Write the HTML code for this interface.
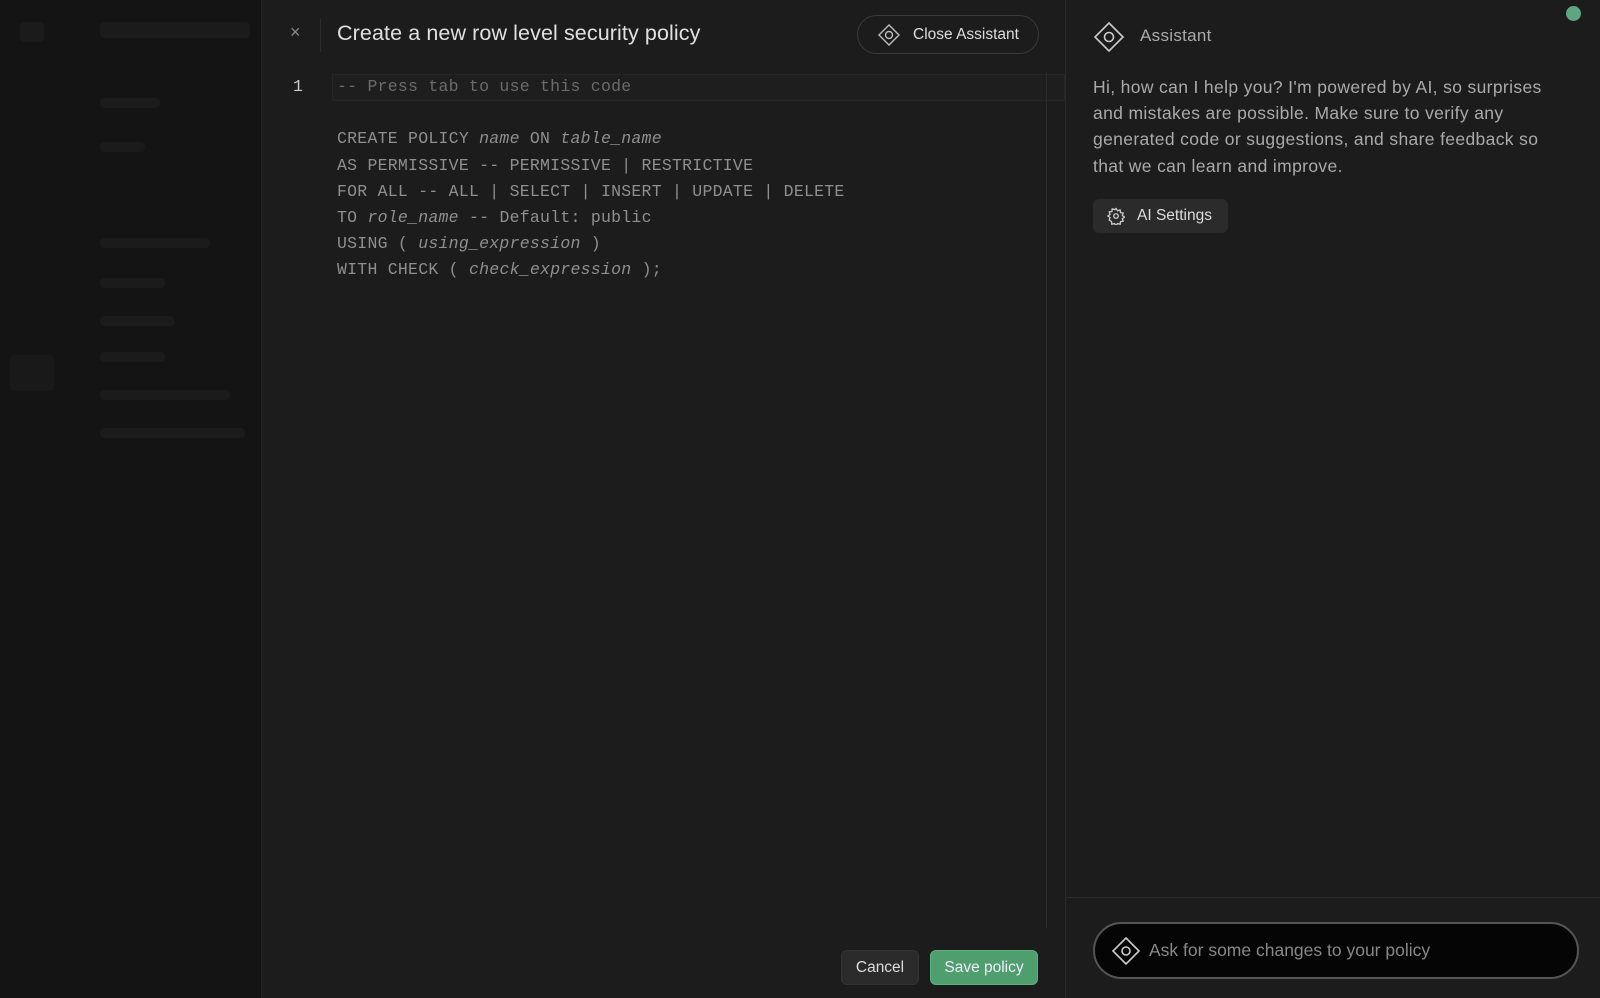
<!DOCTYPE html>
<html><head><style>
*{margin:0;padding:0;box-sizing:border-box}
body{width:1600px;height:998px;background:#161616;font-family:"Liberation Sans",sans-serif;position:relative;overflow:hidden}
.a{position:absolute}
.side{left:0;top:0;width:262px;height:998px;background:#141414;border-right:1px solid #222}
.blob{position:absolute;background:#1b1b1b;border-radius:4px}
.main{left:262px;top:0;width:803px;height:998px;background:#1c1c1c}
.code{font-family:"Liberation Mono",monospace;font-size:16.5px;color:#8f8f8f;white-space:pre;line-height:26.2px;letter-spacing:0.25px}
.code i{font-style:italic}
.asst{left:1065px;top:0;width:535px;height:998px;background:#1c1c1c;border-left:1px solid #2a2a2a}
</style></head><body>
<div class="a side">
<div class="blob" style="left:20px;top:22px;width:24px;height:20px"></div>
<div class="blob" style="left:100px;top:22px;width:150px;height:16px"></div>
<div class="blob" style="left:100px;top:98px;width:60px;height:10px"></div>
<div class="blob" style="left:100px;top:142px;width:45px;height:10px"></div>
<div class="blob" style="left:100px;top:238px;width:110px;height:10px"></div>
<div class="blob" style="left:100px;top:278px;width:65px;height:10px"></div>
<div class="blob" style="left:100px;top:316px;width:75px;height:10px"></div>
<div class="blob" style="left:100px;top:352px;width:65px;height:10px"></div>
<div class="blob" style="left:100px;top:390px;width:130px;height:10px"></div>
<div class="blob" style="left:100px;top:428px;width:145px;height:10px"></div>
<div class="blob" style="left:10px;top:355px;width:44px;height:36px;background:#191919"></div>
</div>
<div class="a main">
<div class="a" style="left:28px;top:22px;color:#888;font-size:18px">×</div>
<div class="a" style="left:58px;top:18px;width:1px;height:34px;background:#2c2c2c"></div>
<div class="a" style="left:75px;top:21px;color:#e0e0e0;font-size:21.5px;letter-spacing:0.1px">Create a new row level security policy</div>
<div class="a" style="left:595px;top:15px;width:182px;height:39px;border:1px solid #3a3a3a;border-radius:20px;color:#ddd;font-size:15.5px;padding:10px 0 0 55px">Close Assistant
<svg class="a" style="left:20px;top:8px" width="22" height="22" viewBox="0 0 22 22" fill="none" stroke="#bbb" stroke-width="1.4"><path d="M11 1L21 11L11 21L1 11Z"/><circle cx="11" cy="11" r="3.5"/></svg></div>
<div class="a" style="left:70px;top:74px;width:733px;height:27px;border:1px solid #262626;background:#1e1e1e"></div>
<div class="a code" style="left:31px;top:74px;color:#ccc">1</div>
<div class="a code" style="left:75px;top:74px"><span style="color:#6b6b6b">-- Press tab to use this code</span>

CREATE POLICY <i>name</i> ON <i>table_name</i>
AS PERMISSIVE -- PERMISSIVE | RESTRICTIVE
FOR ALL -- ALL | SELECT | INSERT | UPDATE | DELETE
TO <i>role_name</i> -- Default: public
USING ( <i>using_expression</i> )
WITH CHECK ( <i>check_expression</i> );</div>
<div class="a" style="left:784px;top:72px;width:1px;height:856px;background:#2c2c2c"></div>
<div class="a" style="left:579px;top:950px;width:78px;height:35px;background:#2b2b2b;border:1px solid #333;border-radius:6px;color:#ddd;font-size:15.5px;text-align:center;line-height:33px">Cancel</div>
<div class="a" style="left:668px;top:950px;width:108px;height:35px;background:#4e9e6e;border:1px solid #5fb07f;border-radius:6px;color:#eef;font-size:15.5px;text-align:center;line-height:33px">Save policy</div>
</div>
<div class="a asst">
<svg class="a" style="left:27px;top:21px" width="32" height="32" viewBox="0 0 32 32" fill="none" stroke="#ccc" stroke-width="1.6"><path d="M16 2L30 16L16 30L2 16Z"/><circle cx="16" cy="16" r="4.5"/></svg>
<div class="a" style="left:74px;top:26px;color:#aaa;font-size:17px;letter-spacing:0.3px">Assistant</div>
<div class="a" style="left:27px;top:74px;width:470px;color:#aaa;font-size:17.5px;line-height:26.2px;letter-spacing:0.35px">Hi, how can I help you? I'm powered by AI, so surprises and mistakes are possible. Make sure to verify any generated code or suggestions, and share feedback so that we can learn and improve.</div>
<div class="a" style="left:27px;top:199px;width:135px;height:34px;background:#2b2b2b;border-radius:6px;color:#ddd;font-size:15.5px;padding:8px 0 0 44px">AI Settings
<svg class="a" style="left:14px;top:8px" width="18" height="18" viewBox="0 0 24 24" fill="none" stroke="#ccc" stroke-width="1.8"><circle cx="12" cy="12" r="3"/><path d="M12 2l2 3 3.5-1 .5 3.5 3.5.5-1 3.5 3 2-3 2 1 3.5-3.5.5-.5 3.5-3.5-1-2 3-2-3-3.5 1-.5-3.5L3 17.5l1-3.5-3-2 3-2-1-3.5 3.5-.5L7 2.5 10.5 3.5Z"/></svg></div>
<div class="a" style="left:0;top:897px;width:535px;height:1px;background:#2c2c2c"></div>
<div class="a" style="left:27px;top:922px;width:486px;height:57px;background:#050505;border:2px solid #555;border-radius:29px;color:#888;font-size:17.5px;padding:16px 0 0 54px">Ask for some changes to your policy
<svg class="a" style="left:16px;top:12px" width="30" height="30" viewBox="0 0 30 30" fill="none" stroke="#ccc" stroke-width="1.6"><path d="M15 2L28 15L15 28L2 15Z"/><circle cx="15" cy="15" r="4"/></svg></div>
<div class="a" style="left:500px;top:6px;width:15px;height:15px;border-radius:50%;background:#5fa583"></div>
</div>
</body></html>
